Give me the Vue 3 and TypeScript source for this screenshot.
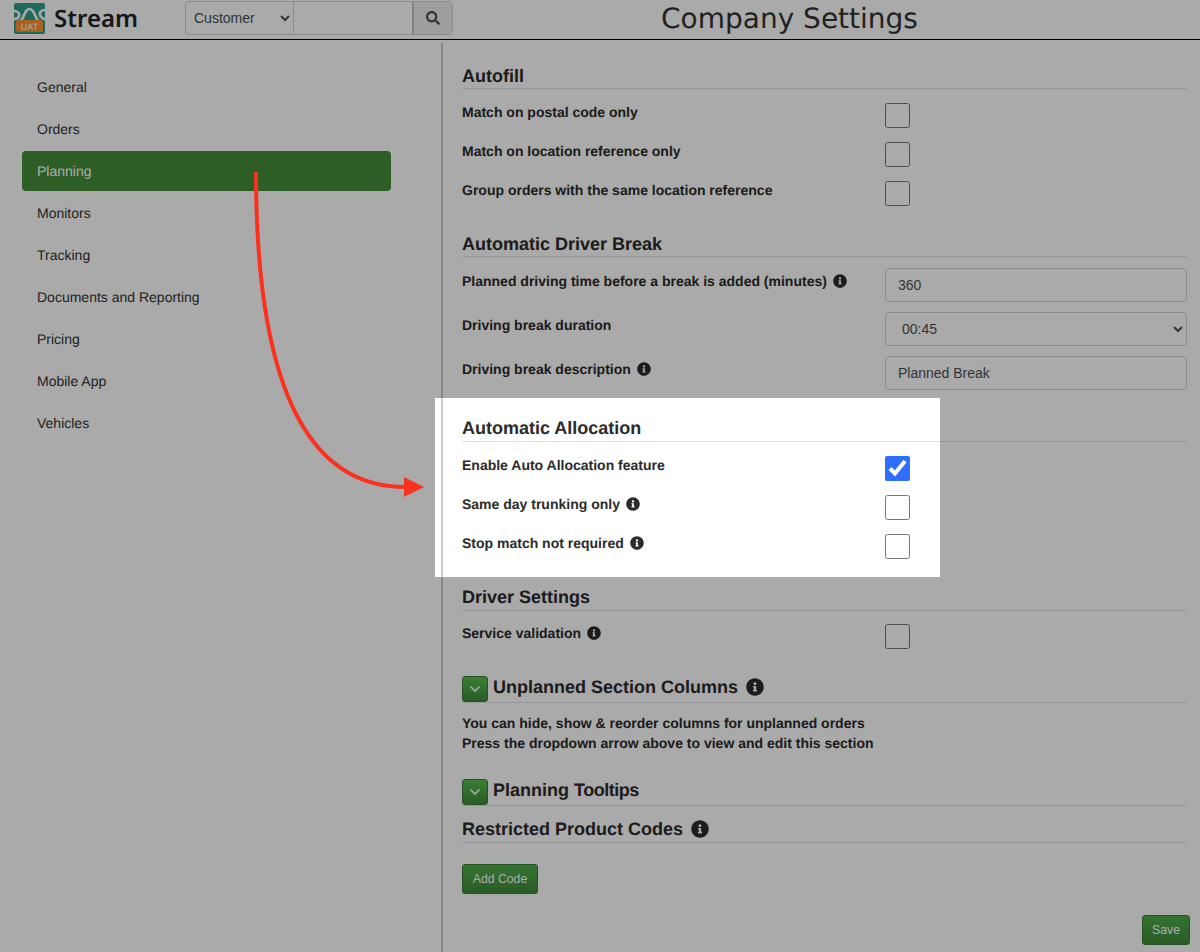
<script setup lang="ts">
const infoPath = "M256 8C119.043 8 8 119.083 8 256c0 136.997 111.043 248 248 248s248-111.003 248-248C504 119.083 392.957 8 256 8zm0 110c23.196 0 42 18.804 42 42s-18.804 42-42 42-42-18.804-42-42 18.804-42 42-42zm56 254c0 6.627-5.373 12-12 12h-88c-6.627 0-12-5.373-12-12v-24c0-6.627 5.373-12 12-12h12v-64h-12c-6.627 0-12-5.373-12-12v-24c0-6.627 5.373-12 12-12h64c6.627 0 12 5.373 12 12v100h12c6.627 0 12 5.373 12 12v24z";
const navItems: string[] = ["General", "Orders", "Planning", "Monitors", "Tracking", "Documents and Reporting", "Pricing", "Mobile App", "Vehicles"];
const autofill: string[] = ["Match on postal code only", "Match on location reference only", "Group orders with the same location reference"];
</script>

<template>
  <div class="page">
    <header class="topbar">
      <svg class="logo" viewBox="0 0 31 31" width="31" height="31">
        <rect width="31" height="31" rx="2" fill="#2f9f87" />
        <g fill="none" stroke="#fff" stroke-width="2.6">
          <path d="M0 8c3 0 6 2 5 5-.5 2-3 3-5 3" />
          <path d="M6 18c4-1 4-12 9.500-12S21 17 25 18" />
          <path d="M31 7c-3 0-6 2-5 5 .5 2 3 4 5 4" />
        </g>
        <rect x="2" y="17" width="27" height="12" rx="1.500" fill="#fc9230" />
        <text x="15.500" y="26.500" text-anchor="middle" class="logo-text">UAT</text>
      </svg>
      <span class="brand">Stream</span>
      <div class="search">
        <select class="search-select">
          <option>Customer</option>
        </select>
        <input class="search-input" type="text" />
        <button class="search-btn" type="button">
          <svg viewBox="0 0 512 512" width="14" height="14"><path fill="#495057" d="M505 442.7L405.3 343c-4.5-4.5-10.6-7-17-7H372c27.6-35.3 44-79.7 44-128C416 93.1 322.9 0 208 0S0 93.1 0 208s93.1 208 208 208c48.3 0 92.7-16.4 128-44v16.3c0 6.4 2.5 12.5 7 17l99.7 99.7c9.4 9.4 24.6 9.4 33.9 0l28.3-28.3c9.4-9.4 9.4-24.6.1-34zM208 336c-70.7 0-128-57.2-128-128 0-70.7 57.2-128 128-128 70.7 0 128 57.2 128 128 0 70.7-57.2 128-128 128z" /></svg>
        </button>
      </div>
      <h1 class="page-title">Company Settings</h1>
    </header>

    <div class="body">
      <nav class="sidebar">
        <a v-for="item in navItems" :key="item" class="nav-item" :class="{ active: item === 'Planning' }">{{ item }}</a>
      </nav>

      <main class="content">
        <section class="block first">
          <h2 class="head">Autofill</h2>
          <div v-for="label in autofill" :key="label" class="row">
            <span class="label">{{ label }}</span>
            <input class="check" type="checkbox" />
          </div>
        </section>

        <section class="block second">
          <h2 class="head">Automatic Driver Break</h2>
          <div class="row field">
            <span class="label">Planned driving time before a break is added (minutes)
              <svg class="info" viewBox="0 0 512 512"><path :d="infoPath" /></svg>
            </span>
            <input class="control" type="text" value="360" />
          </div>
          <div class="row field">
            <span class="label">Driving break duration</span>
            <select class="control select"><option>00:45</option></select>
          </div>
          <div class="row field">
            <span class="label">Driving break description
              <svg class="info" viewBox="0 0 512 512"><path :d="infoPath" /></svg>
            </span>
            <input class="control" type="text" value="Planned Break" />
          </div>
        </section>

        <section class="block third">
          <h2 class="head">Automatic Allocation</h2>
          <div class="row">
            <span class="label">Enable Auto Allocation feature</span>
            <input class="check" type="checkbox" checked />
          </div>
          <div class="row">
            <span class="label">Same day trunking only
              <svg class="info" viewBox="0 0 512 512"><path :d="infoPath" /></svg>
            </span>
            <input class="check" type="checkbox" />
          </div>
          <div class="row">
            <span class="label">Stop match not required
              <svg class="info" viewBox="0 0 512 512"><path :d="infoPath" /></svg>
            </span>
            <input class="check" type="checkbox" />
          </div>
        </section>

        <section class="block fourth">
          <h2 class="head">Driver Settings</h2>
          <div class="row">
            <span class="label">Service validation
              <svg class="info" viewBox="0 0 512 512"><path :d="infoPath" /></svg>
            </span>
            <input class="check" type="checkbox" />
          </div>
        </section>

        <section class="block fifth">
          <h2 class="head with-toggle">
            <button class="toggle" type="button">
              <svg viewBox="0 0 12 8" width="12" height="8"><path d="M1.500 1.500 6 6l4.500-4.500" fill="none" stroke="#fff" stroke-width="1.600" /></svg>
            </button>
            Unplanned Section Columns
            <svg class="info big" viewBox="0 0 512 512"><path :d="infoPath" /></svg>
          </h2>
          <p class="note">You can hide, show &amp; reorder columns for unplanned orders<br />Press the dropdown arrow above to view and edit this section</p>
        </section>

        <section class="block sixth">
          <h2 class="head with-toggle">
            <button class="toggle" type="button">
              <svg viewBox="0 0 12 8" width="12" height="8"><path d="M1.500 1.500 6 6l4.500-4.500" fill="none" stroke="#fff" stroke-width="1.600" /></svg>
            </button>
            <span>Planning <span class="tight">Tooltips</span></span>
          </h2>
        </section>

        <section class="block seventh">
          <h2 class="head">Restricted Product Codes
            <svg class="info big" viewBox="0 0 512 512"><path :d="infoPath" /></svg>
          </h2>
          <button class="btn add" type="button">Add Code</button>
        </section>

        <div class="actions">
          <button class="btn save" type="button">Save</button>
        </div>
      </main>
    </div>

    <div class="spotlight"></div>

    <svg class="arrow" width="1200" height="952" viewBox="0 0 1200 952">
      <path d="M256 172C256 370 300 487 405 487" fill="none" stroke="#fb3120" stroke-width="4" />
      <path d="M404 477 424 487 404 497z" fill="#fb3120" />
    </svg>
  </div>
</template>

<style scoped>
.page {
  position: relative;
  width: 1200px;
  height: 952px;
  overflow: hidden;
  background: #fff;
  color: #2b2b2b;
  font-family: "Liberation Sans", Arial, sans-serif;
  font-size: 14px;
  text-rendering: geometricPrecision;
  font-kerning: normal;
}
.topbar {
  display: flex;
  align-items: flex-start;
  height: 40px;
  padding: 3px 0 0 14px;
  box-sizing: border-box;
  border-bottom: 1px solid #000;
}
.logo { flex: none; }
.logo-text {
  font-family: "Liberation Sans", Arial, sans-serif;
  font-size: 9px;
  fill: #fff;
}
.brand {
  margin-left: 9px;
  width: 131px;
  font-family: "Noto Sans", sans-serif;
  font-weight: 600;
  font-size: 24px;
  line-height: 31px;
  color: #212529;
}
.search {
  display: flex;
  width: 268px;
  height: 34px;
  margin-top: -2px;
  border: 1px solid #ced4da;
  border-radius: 4px;
  box-sizing: border-box;
}
.search-select {
  width: 108px;
  border: 0;
  border-right: 1px solid #ced4da;
  background: transparent;
  font: 14px "Liberation Sans", Arial, sans-serif;
  color: #495057;
  padding-left: 4px;
  outline: 0;
}
.search-input {
  width: 118px;
  border: 0;
  background: transparent;
  padding: 0;
  outline: 0;
}
.search-btn {
  flex: 1;
  border: 0;
  border-left: 2px solid #c4c4c4;
  background: #eee;
  display: flex;
  align-items: center;
  justify-content: center;
  border-radius: 0 3px 3px 0;
  padding: 0;
}
.page-title {
  margin: -3px 0 0 208px;
  font-family: "DejaVu Sans", sans-serif;
  font-weight: 400;
  font-size: 28px;
  line-height: 38px;
  color: #333;
  white-space: nowrap;
}
.body {
  display: flex;
  height: 912px;
}
.sidebar {
  width: 443px;
  flex: none;
  box-sizing: border-box;
  padding: 24px 50px 0 22px;
  margin-top: 3px;
  border-right: 2px solid #ccc;
  display: flex;
  flex-direction: column;
  gap: 2px;
}
.nav-item {
  display: block;
  height: 40px;
  line-height: 41px;
  padding-left: 15px;
  border-radius: 4px;
  color: #333;
}
.nav-item.active {
  background: #428d3a;
  color: #fff;
}
.content {
  flex: 1;
  min-width: 0;
  padding: 0 13px 0 19px;
}
.block { display: block; }
.first { padding-top: 24px; }
.second { margin-top: 26px; }
.third { margin-top: 27px; }
.fourth { margin-top: 27px; }
.fifth { margin-top: 27px; }
.sixth { margin-top: 26px; }
.seventh { margin-top: 10px; }
.head {
  margin: 0 0 14px;
  height: 24px;
  line-height: 22px;
  font-size: 18px;
  font-weight: 700;
  color: #2b2b2b;
  border-bottom: 1px solid #dee2e6;
  box-sizing: content-box;
  display: flex;
  align-items: center;
}
.second .head { margin-bottom: 11px; }
.third .head { height: 22px; padding-bottom: 2px; }
.fourth .head { height: 22px; padding-bottom: 2px; margin-bottom: 13px; }
.fifth .head { margin-bottom: 10px; }
.sixth .head { margin-bottom: 0; }
.seventh .head { height: 26px; }
.head.with-toggle {
  height: 26px;
  align-items: flex-start;
}
.tight { letter-spacing: -0.5px; }
.with-toggle .info.big { margin-top: 2px; }
.row {
  display: flex;
  justify-content: space-between;
  align-items: flex-start;
  height: 25px;
  margin-bottom: 14px;
}
.row.field {
  height: 34px;
  margin-bottom: 10px;
}
.label {
  width: 423px;
  flex: none;
  font-weight: 700;
  font-size: 14px;
  line-height: 18px;
  color: #2b2b2b;
}
.field .label { padding-top: 4px; }
.info {
  width: 14px;
  height: 14px;
  margin-left: 2px;
  vertical-align: -2px;
  fill: #2b2b2b;
}
.info.big {
  width: 18px;
  height: 18px;
  margin-left: 8px;
  vertical-align: -3px;
}
.check {
  width: 25px;
  height: 25px;
  margin: 0 277px 0 0;
  accent-color: #2f6dff;
  flex: none;
}
.control {
  width: 302px;
  height: 34px;
  box-sizing: border-box;
  border: 1px solid #ced4da;
  border-radius: 4px;
  padding: 0 12px;
  background: #fff;
  font: 14px "Liberation Sans", Arial, sans-serif;
  color: #495057;
  flex: none;
}
.select { padding-left: 12px; }
.toggle {
  width: 26px;
  height: 26px;
  padding: 0;
  margin-right: 5px;
  border: 1px solid #3a7a33;
  border-radius: 3px;
  background: linear-gradient(#57bf50, #3f8a39);
  display: flex;
  align-items: center;
  justify-content: center;
  flex: none;
}
.note {
  margin: 0;
  font-weight: 700;
  font-size: 14px;
  line-height: 20px;
  color: #2b2b2b;
}
.btn {
  display: block;
  height: 30px;
  margin-top: 21px;
  padding: 0 10px;
  border: 1px solid #3a7a33;
  border-radius: 3px;
  background: linear-gradient(#4fae48, #3f8a39);
  color: #fff;
  font: 12.25px "Liberation Sans", Arial, sans-serif;
}
.add { width: 76px; padding: 0; }
.actions {
  display: flex;
  justify-content: flex-end;
  margin-right: -3px;
}
.save { margin-top: 21px; width: 48px; padding: 0; }
.spotlight {
  position: absolute;
  left: 435px;
  top: 398px;
  width: 505px;
  height: 179px;
  box-shadow: 0 0 0 1400px rgba(0, 0, 0, 0.333);
  pointer-events: none;
}
.arrow {
  position: absolute;
  left: 0;
  top: 0;
  pointer-events: none;
}
</style>
